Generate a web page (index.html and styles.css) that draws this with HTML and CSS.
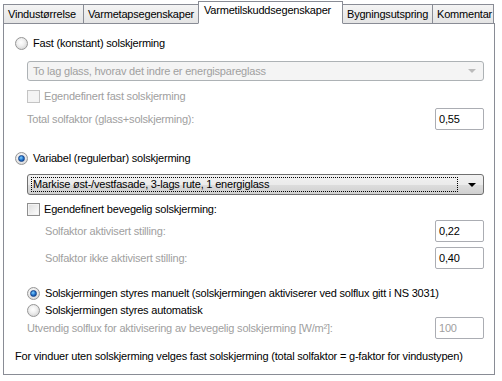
FILE: index.html
```html
<!DOCTYPE html>
<html lang="no">
<head>
    <meta charset="UTF-8">
    <title>Varmetilskuddsegenskaper</title>
    <link rel="stylesheet" href="styles.css">
</head>
<body>
    <div class="dialog">
        <div class="tabs">
            <div class="tab tab-1">Vindustørrelse</div>
            <div class="tab tab-2">Varmetapsegenskaper</div>
            <div class="tab tab-3 active">Varmetilskuddsegenskaper</div>
            <div class="tab tab-4">Bygningsutspring</div>
            <div class="tab tab-5">Kommentar</div>
        </div>
        <div class="panel">
            <!-- Fast solskjerming -->
            <div class="row r-fast">
                <span class="radio"></span>
                <span>Fast (konstant) solskjerming</span>
            </div>
            <div class="select disabled s-fast">
                <span class="select-text">To lag glass, hvorav det indre er energispareglass</span>
                <span class="arrow"></span>
            </div>
            <div class="row sub c-fast">
                <span class="check disabled"></span>
                <span class="muted">Egendefinert fast solskjerming</span>
            </div>
            <div class="field sub f-total">
                <span class="muted">Total solfaktor (glass+solskjerming):</span>
                <span class="input">0,55</span>
            </div>

            <!-- Variabel solskjerming -->
            <div class="row r-var">
                <span class="radio checked"></span>
                <span>Variabel (regulerbar) solskjerming</span>
            </div>
            <div class="select s-var">
                <span class="select-text focus">Markise øst-/vestfasade, 3-lags rute, 1 energiglass</span>
                <span class="arrow"></span>
            </div>
            <div class="row sub c-var">
                <span class="check"></span>
                <span>Egendefinert bevegelig solskjerming:</span>
            </div>
            <div class="field deep f-akt">
                <span class="muted">Solfaktor aktivisert stilling:</span>
                <span class="input">0,22</span>
            </div>
            <div class="field deep f-ikke">
                <span class="muted">Solfaktor ikke aktivisert stilling:</span>
                <span class="input">0,40</span>
            </div>

            <div class="row sub r-man">
                <span class="radio checked"></span>
                <span>Solskjermingen styres manuelt (solskjermingen aktiviserer ved solflux gitt i NS 3031)</span>
            </div>
            <div class="row sub r-auto">
                <span class="radio"></span>
                <span>Solskjermingen styres automatisk</span>
            </div>
            <div class="field sub f-flux">
                <span class="muted">Utvendig solflux for aktivisering av bevegelig solskjerming [W/m²]:</span>
                <span class="input muted">100</span>
            </div>

            <div class="row note">For vinduer uten solskjerming velges fast solskjerming (total solfaktor = g-faktor for vindustypen)</div>
        </div>
    </div>
</body>
</html>
```

FILE: styles.css
```css
body {
    margin: 0;
    background-color: #ffffff;
    font-family: "Liberation Sans", Arial, sans-serif;
    font-size: 11px;
    letter-spacing: -0.2px;
    color: #000;
}
.dialog {
    padding-left: 3px;
    width: 492px;
}
.tabs {
    display: flex;
    align-items: flex-end;
    height: 23px;
}
.tab {
    box-sizing: border-box;
    height: 20px;
    margin-bottom: -1px;
    border: 1px solid #898c95;
    border-left: none;
    background: linear-gradient(#f4f4f4, #e4e4e4);
    padding-left: 4px;
    line-height: 18px;
    white-space: nowrap;
    overflow: hidden;
}
.tab-1 { width: 81px; border-left: 1px solid #898c95; }
.tab-2 { width: 115px; }
.tab-4 { width: 90px; }
.tab-5 { width: 61px; }
.tab.active {
    position: relative;
    z-index: 1;
    height: 23px;
    margin-bottom: -1px;
    background: #ffffff;
    border-left: 1px solid #898c95;
    border-bottom: 1px solid #ffffff;
    padding-left: 5px;
    line-height: 17px;
    margin-left: -1px;
    width: 145px;
}
.panel {
    box-sizing: border-box;
    height: 352px;
    border: 1px solid #898c95;
    padding: 0 10px 0 11px;
    display: flex;
    flex-direction: column;
}
.row {
    display: flex;
    align-items: center;
    height: 18px;
    white-space: nowrap;
}
.sub { margin-left: 12px; }
.deep { margin-left: 30px; }
.muted { color: #a0a0a0; }

.radio {
    box-sizing: border-box;
    width: 13px;
    height: 13px;
    border-radius: 50%;
    border: 1px solid #969696;
    background: radial-gradient(circle at 45% 40%, #ffffff 0%, #f0f0f0 40%, #c8c8c8 100%);
    margin-right: 5px;
    display: flex;
    align-items: center;
    justify-content: center;
    flex: none;
}
.radio.checked::after {
    content: "";
    width: 5px;
    height: 5px;
    border-radius: 50%;
    background: radial-gradient(circle at 40% 35%, #7fd0ff 0%, #1e6ec8 55%, #0b3d86 100%);
    border: 1px solid #17448a;
}
.check {
    box-sizing: border-box;
    width: 13px;
    height: 13px;
    border: 1px solid #8f8f8f;
    background: linear-gradient(135deg, #dcdcdc, #ffffff);
    box-shadow: inset 0 0 0 1px #f3f3f3;
    margin-right: 4px;
    flex: none;
}
.check.disabled {
    border-color: #c4c4c4;
    background: #f4f4f4;
}

.select {
    box-sizing: border-box;
    display: flex;
    align-items: center;
    margin-left: 12px;
    border: 1px solid #707070;
    border-radius: 3px;
    background: linear-gradient(#f2f2f2 0%, #ebebeb 50%, #dddddd 51%, #cfcfcf 100%);
    padding: 2px 2px 2px 3px;
}
.select.disabled {
    border-color: #adb2b5;
    background: #f4f4f4;
    color: #a0a0a0;
}
.select-text {
    flex: 1;
    padding-left: 2px;
    line-height: 13px;
    white-space: nowrap;
}
.select-text.focus {
    border: 1px dotted #000;
    padding-left: 1px;
    margin-right: 2px;
}
.arrow {
    width: 0;
    height: 0;
    margin: 0 5px 0 8px;
    border-left: 4px solid transparent;
    border-right: 4px solid transparent;
    border-top: 4px solid #000;
}
.select.disabled .arrow {
    border-top-color: #bbbbbb;
}
.field {
    display: flex;
    align-items: center;
    justify-content: space-between;
    height: 22px;
    white-space: nowrap;
}
.input {
    box-sizing: border-box;
    width: 49px;
    height: 22px;
    border: 1px solid #abadb3;
    border-radius: 2px;
    padding: 0 3px;
    line-height: 20px;
}

.r-fast { margin-top: 10px; }
.s-fast { margin-top: 9px; height: 20px; }
.c-fast { margin-top: 6px; }
.f-total { margin-top: 3px; }
.r-var { margin-top: 19px; }
.s-var { margin-top: 7px; height: 21px; }
.c-var { margin-top: 5px; }
.f-akt { margin-top: 2px; }
.f-ikke { margin-top: 5px; }
.r-man { margin-top: 15px; }
.r-auto { height: 16px; }
.f-flux { margin-top: -1px; }
.note { margin-top: 8px; }
```
